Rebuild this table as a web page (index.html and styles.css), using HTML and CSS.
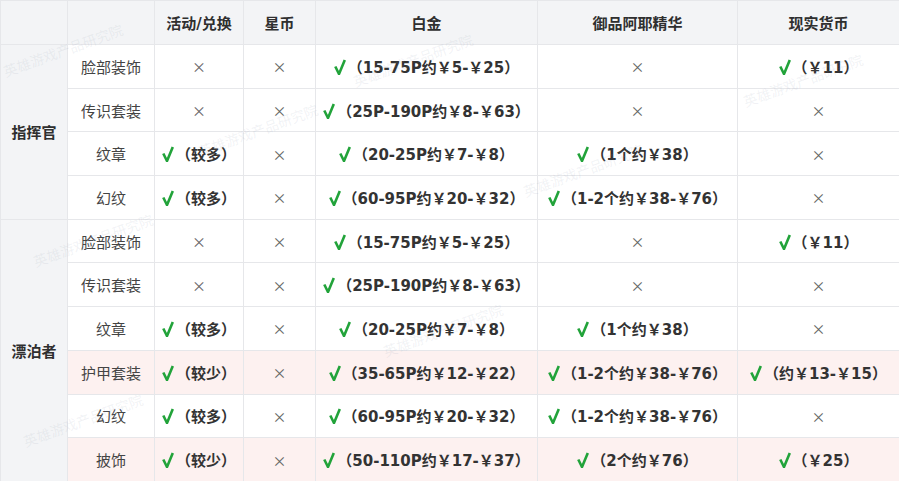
FILE: index.html
```html
<!DOCTYPE html>
<html lang="zh">
<head>
<meta charset="utf-8">
<link rel="stylesheet" href="styles.css">
</head>
<body>
<div class="wrap">
<table class="grid">
  <colgroup>
    <col class="c1"><col class="c2"><col class="c3"><col class="c4"><col class="c5"><col class="c6"><col class="c7">
  </colgroup>
  <thead>
    <tr>
      <th class="grp"></th><th></th><th>活动/兑换</th><th>星币</th><th>白金</th><th>御品阿耶精华</th><th>现实货币</th>
    </tr>
  </thead>
  <tbody>
    <tr>
      <td class="grp" rowspan="4">指挥官</td>
      <td class="item">脸部装饰</td><td class="no">×</td><td class="no">×</td>
      <td class="yes"><svg class="ck" viewBox="0 0 12 16"><path d="M1.3 7.5 L5 15 L10.8 1"/></svg>（15-75P约￥5-￥25）</td>
      <td class="no">×</td>
      <td class="yes"><svg class="ck" viewBox="0 0 12 16"><path d="M1.3 7.5 L5 15 L10.8 1"/></svg>（￥11）</td>
    </tr>
    <tr>
      <td class="item">传识套装</td><td class="no">×</td><td class="no">×</td>
      <td class="yes"><svg class="ck" viewBox="0 0 12 16"><path d="M1.3 7.5 L5 15 L10.8 1"/></svg>（25P-190P约￥8-￥63）</td>
      <td class="no">×</td><td class="no">×</td>
    </tr>
    <tr>
      <td class="item">纹章</td>
      <td class="yes"><svg class="ck" viewBox="0 0 12 16"><path d="M1.3 7.5 L5 15 L10.8 1"/></svg>（较多）</td><td class="no">×</td>
      <td class="yes"><svg class="ck" viewBox="0 0 12 16"><path d="M1.3 7.5 L5 15 L10.8 1"/></svg>（20-25P约￥7-￥8）</td>
      <td class="yes"><svg class="ck" viewBox="0 0 12 16"><path d="M1.3 7.5 L5 15 L10.8 1"/></svg>（1个约￥38）</td>
      <td class="no">×</td>
    </tr>
    <tr>
      <td class="item">幻纹</td>
      <td class="yes"><svg class="ck" viewBox="0 0 12 16"><path d="M1.3 7.5 L5 15 L10.8 1"/></svg>（较多）</td><td class="no">×</td>
      <td class="yes"><svg class="ck" viewBox="0 0 12 16"><path d="M1.3 7.5 L5 15 L10.8 1"/></svg>（60-95P约￥20-￥32）</td>
      <td class="yes"><svg class="ck" viewBox="0 0 12 16"><path d="M1.3 7.5 L5 15 L10.8 1"/></svg>（1-2个约￥38-￥76）</td>
      <td class="no">×</td>
    </tr>
    <tr>
      <td class="grp" rowspan="6">漂泊者</td>
      <td class="item">脸部装饰</td><td class="no">×</td><td class="no">×</td>
      <td class="yes"><svg class="ck" viewBox="0 0 12 16"><path d="M1.3 7.5 L5 15 L10.8 1"/></svg>（15-75P约￥5-￥25）</td>
      <td class="no">×</td>
      <td class="yes"><svg class="ck" viewBox="0 0 12 16"><path d="M1.3 7.5 L5 15 L10.8 1"/></svg>（￥11）</td>
    </tr>
    <tr>
      <td class="item">传识套装</td><td class="no">×</td><td class="no">×</td>
      <td class="yes"><svg class="ck" viewBox="0 0 12 16"><path d="M1.3 7.5 L5 15 L10.8 1"/></svg>（25P-190P约￥8-￥63）</td>
      <td class="no">×</td><td class="no">×</td>
    </tr>
    <tr>
      <td class="item">纹章</td>
      <td class="yes"><svg class="ck" viewBox="0 0 12 16"><path d="M1.3 7.5 L5 15 L10.8 1"/></svg>（较多）</td><td class="no">×</td>
      <td class="yes"><svg class="ck" viewBox="0 0 12 16"><path d="M1.3 7.5 L5 15 L10.8 1"/></svg>（20-25P约￥7-￥8）</td>
      <td class="yes"><svg class="ck" viewBox="0 0 12 16"><path d="M1.3 7.5 L5 15 L10.8 1"/></svg>（1个约￥38）</td>
      <td class="no">×</td>
    </tr>
    <tr class="pink">
      <td class="item">护甲套装</td>
      <td class="yes"><svg class="ck" viewBox="0 0 12 16"><path d="M1.3 7.5 L5 15 L10.8 1"/></svg>（较少）</td><td class="no">×</td>
      <td class="yes"><svg class="ck" viewBox="0 0 12 16"><path d="M1.3 7.5 L5 15 L10.8 1"/></svg>（35-65P约￥12-￥22）</td>
      <td class="yes"><svg class="ck" viewBox="0 0 12 16"><path d="M1.3 7.5 L5 15 L10.8 1"/></svg>（1-2个约￥38-￥76）</td>
      <td class="yes"><svg class="ck" viewBox="0 0 12 16"><path d="M1.3 7.5 L5 15 L10.8 1"/></svg>（约￥13-￥15）</td>
    </tr>
    <tr>
      <td class="item">幻纹</td>
      <td class="yes"><svg class="ck" viewBox="0 0 12 16"><path d="M1.3 7.5 L5 15 L10.8 1"/></svg>（较多）</td><td class="no">×</td>
      <td class="yes"><svg class="ck" viewBox="0 0 12 16"><path d="M1.3 7.5 L5 15 L10.8 1"/></svg>（60-95P约￥20-￥32）</td>
      <td class="yes"><svg class="ck" viewBox="0 0 12 16"><path d="M1.3 7.5 L5 15 L10.8 1"/></svg>（1-2个约￥38-￥76）</td>
      <td class="no">×</td>
    </tr>
    <tr class="pink">
      <td class="item">披饰</td>
      <td class="yes"><svg class="ck" viewBox="0 0 12 16"><path d="M1.3 7.5 L5 15 L10.8 1"/></svg>（较少）</td><td class="no">×</td>
      <td class="yes"><svg class="ck" viewBox="0 0 12 16"><path d="M1.3 7.5 L5 15 L10.8 1"/></svg>（50-110P约￥17-￥37）</td>
      <td class="yes"><svg class="ck" viewBox="0 0 12 16"><path d="M1.3 7.5 L5 15 L10.8 1"/></svg>（2个约￥76）</td>
      <td class="yes"><svg class="ck" viewBox="0 0 12 16"><path d="M1.3 7.5 L5 15 L10.8 1"/></svg>（￥25）</td>
    </tr>
  </tbody>
</table>
<div class="wm wm1">英雄游戏产品研究院</div>
<div class="wm wm2">英雄游戏产品研究院</div>
<div class="wm wm3">英雄游戏产品研究院</div>
<div class="wm wm4">英雄游戏产品研究院</div>
<div class="wm wm5">英雄游戏产品研究院</div>
<div class="wm wm6">英雄游戏产品研究院</div>
<div class="wm wm7">英雄游戏产品研究院</div>
<div class="wm wm8">英雄游戏产品研究院</div>
</div>
</body>
</html>
```
FILE: styles.css
```css
html, body {
  margin: 0;
  padding: 0;
  background: #ffffff;
}
body {
  font-family: "DejaVu Sans", "Noto Sans CJK SC", sans-serif;
  color: #333333;
}
.wrap {
  position: relative;
  width: 899px;
  height: 481px;
  overflow: hidden;
}
.grid {
  width: 899px;
  border-collapse: collapse;
  table-layout: fixed;
  font-size: 15px;
}
.c1 { width: 67px; }
.c2 { width: 87px; }
.c3 { width: 89px; }
.c4 { width: 72px; }
.c5 { width: 222px; }
.c6 { width: 200px; }
.c7 { width: 162px; }
.grid th,
.grid td {
  border: 1px solid #e6e7ea;
  text-align: center;
  vertical-align: middle;
  padding: 0;
  white-space: nowrap;
}
.grid thead th {
  height: 43px;
  background: #f3f4f6;
  font-weight: 700;
  color: #2f2f2f;
}
.grid tbody tr {
  height: 43.7px;
}
.grid td.grp {
  background: #f3f4f6;
  font-weight: 700;
  color: #2f2f2f;
}
.grid td.item {
  color: #444444;
  font-family: "Noto Sans CJK SC", sans-serif;
}
.grid td.no {
  color: #666666;
  font-size: 14px;
  font-family: "Noto Sans CJK SC", sans-serif;
}
.grid td.yes {
  font-weight: 700;
  color: #333333;
}
.ck {
  width: 12px;
  height: 16px;
  margin-right: 2px;
  vertical-align: -2px;
  fill: none;
  stroke: #22a33a;
  stroke-width: 2.6;
  stroke-linecap: butt;
  stroke-linejoin: miter;
}
.pink td {
  background: #fdf1f0;
}
.wm {
  position: absolute;
  font-family: "Noto Sans CJK SC", sans-serif;
  font-size: 14px;
  color: rgba(140, 150, 170, 0.12);
  transform: rotate(-20deg);
  white-space: nowrap;
  pointer-events: none;
}
.wm1 { left: 0px; top: 40px; }
.wm2 { left: 350px; top: 50px; }
.wm3 { left: 740px; top: 70px; }
.wm4 { left: 195px; top: 120px; }
.wm5 { left: 520px; top: 160px; }
.wm6 { left: 30px; top: 230px; }
.wm7 { left: 380px; top: 320px; }
.wm8 { left: 20px; top: 410px; }
```
